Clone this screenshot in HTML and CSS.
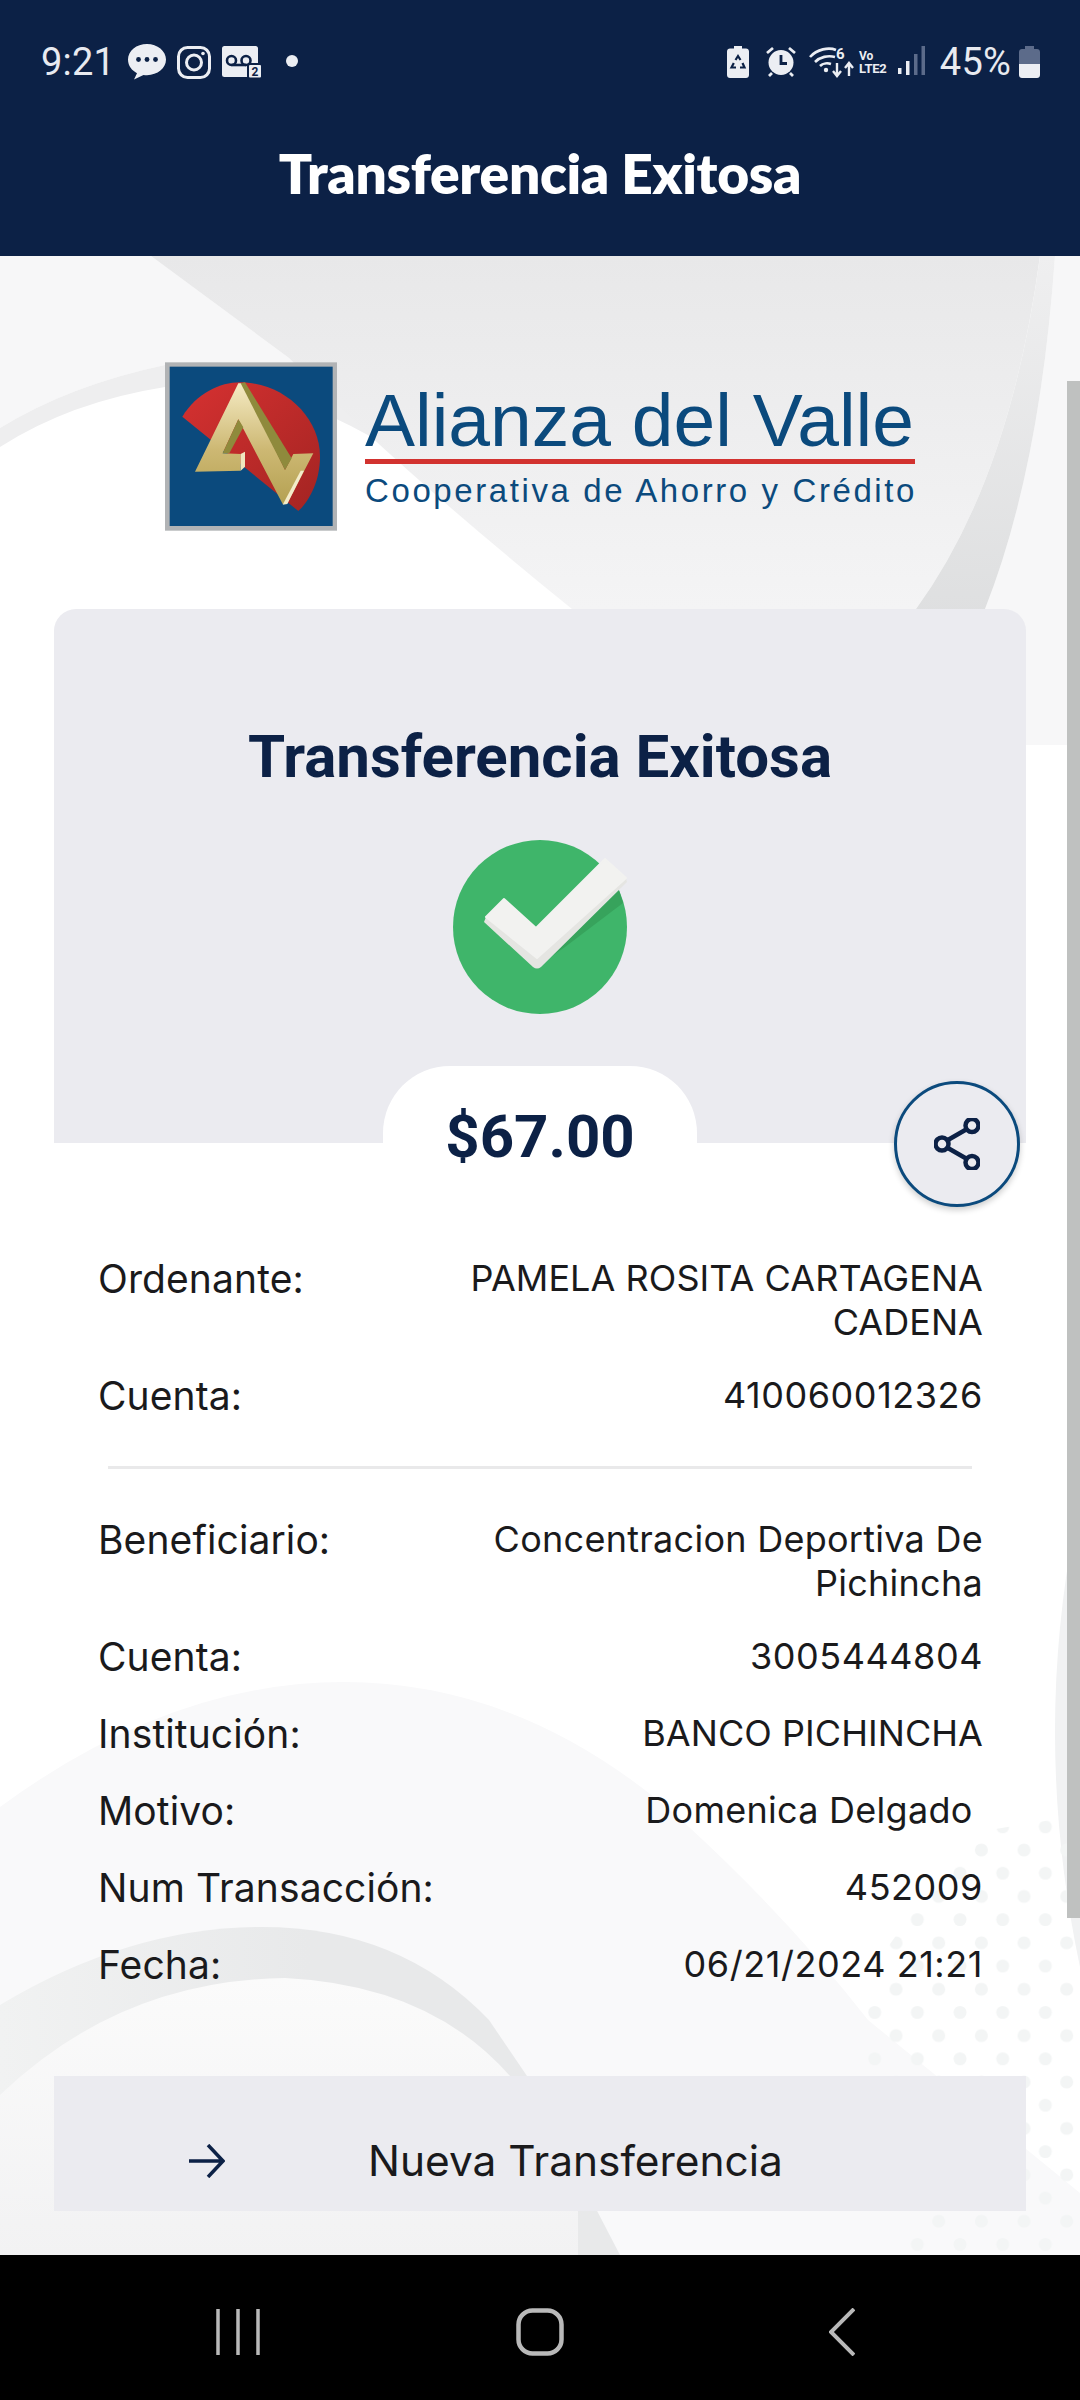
FILE: index.html
```html
<!DOCTYPE html>
<html lang="en">
<head>
  <meta charset="UTF-8" />
  <meta name="viewport" content="width=device-width, initial-scale=1.0" />
  <title>Transferencia Exitosa</title>
  <link rel="stylesheet" href="styles.css">
</head>
<body>
  <div class="page">
    <header class="top">
      <!-- Status bar -->
      <div class="status">
        <div class="status-left">
          <span class="time">9:21</span>
          <svg class="ic-bubble" width="38" height="36" viewBox="0 0 38 36">
            <path fill="#eceef3" d="M19 0C8.5 0 0 6.8 0 15.6c0 6.2 4 11.2 9 13.6L6 35.5l9.5-4.6c1.1.2 2.3.3 3.5.3 10.5 0 19-7 19-15.6S29.500 0 19 0z"/>
            <circle cx="10.500" cy="15.500" r="2.400" fill="#0c2146"/><circle cx="19" cy="15.500" r="2.400" fill="#0c2146"/><circle cx="27.500" cy="15.500" r="2.400" fill="#0c2146"/>
          </svg>
          <svg class="ic-insta" width="34" height="33" viewBox="0 0 34 33" fill="none" stroke="#eceef3" stroke-width="3">
            <rect x="1.500" y="1.500" width="31" height="30" rx="9"/>
            <circle cx="17" cy="16.500" r="7.500"/>
            <circle cx="26" cy="7.500" r="1.800" fill="#eceef3" stroke="none"/>
          </svg>
          <svg class="ic-voice" width="41" height="33" viewBox="0 0 41 33">
            <rect x="0" y="0" width="36" height="31" rx="2.500" fill="#eceef3"/>
            <circle cx="9.500" cy="14.500" r="4.500" fill="none" stroke="#0c2146" stroke-width="2.600"/>
            <circle cx="24" cy="14.500" r="4.500" fill="none" stroke="#0c2146" stroke-width="2.600"/>
            <path d="M9.500 19h14.500" stroke="#0c2146" stroke-width="2.600"/>
            <rect x="26" y="18" width="14" height="14.500" rx="2" fill="#eceef3" stroke="#0c2146" stroke-width="2"/>
            <text class="svg-small" x="33" y="30" text-anchor="middle" font-size="12" fill="#0c2146">2</text>
          </svg>
          <span class="dot"></span>
        </div>
        <div class="status-right">
          <svg class="ic-power" width="22" height="32" viewBox="0 0 22 32">
            <path fill="#eceef3" d="M7 0h8v2.500h4c1.700 0 3 1.300 3 3V29c0 1.700-1.300 3-3 3H3c-1.700 0-3-1.300-3-3V5.500c0-1.700 1.300-3 3-3h4z"/>
            <path fill="none" stroke="#0c2146" stroke-width="2.200" d="M8.500 14l2.500-4 2.500 4M15.500 17l2 4.500h-4.500M9 21.500H4.500l2.300-4.500"/>
          </svg>
          <svg class="ic-alarm" width="30" height="31" viewBox="0 0 30 31">
            <circle cx="15" cy="16.500" r="12.500" fill="#eceef3"/>
            <path d="M1 7l6-5M29 7l-6-5" stroke="#eceef3" stroke-width="2.800" fill="none"/>
            <path d="M6 27l-3 3M24 27l3 3" stroke="#eceef3" stroke-width="2.800" fill="none"/>
            <path d="M15 9v8.500h6" stroke="#0c2146" stroke-width="2.800" fill="none"/>
          </svg>
          <svg class="ic-net" width="84" height="32" viewBox="0 0 84 32">
            <g fill="none" stroke="#eceef3" stroke-width="2.600">
              <path d="M1 11C8 3 20 1 27 4"/>
              <path d="M6 16c5-5 13-7 20-5"/>
              <path d="M11 20c3-3 8-3 11-2"/>
            </g>
            <circle cx="17" cy="24" r="2.200" fill="#eceef3"/>
            <text class="svg-small" x="27" y="13" font-size="15" fill="#eceef3">6</text>
            <path d="M28 17v12M24 25l4 5 4-5M40 30V18M36 22l4-5 4 5" fill="none" stroke="#eceef3" stroke-width="2.400"/>
            <text class="svg-small" x="50" y="14" font-size="12" fill="#eceef3">Vo</text>
            <text class="svg-small" x="50" y="27" font-size="13" letter-spacing="-.2" fill="#eceef3">LTE2</text>
          </svg>
          <svg class="ic-bars" width="27" height="29" viewBox="0 0 27 29">
            <rect x="0" y="22" width="3.500" height="6" fill="#eceef3"/>
            <rect x="8" y="15" width="3.500" height="14" fill="#eceef3"/>
            <rect x="16" y="8" width="3.500" height="21" fill="#5c6b8a"/>
            <rect x="23.500" y="0" width="3.500" height="29" fill="#5c6b8a"/>
          </svg>
          <span class="battery-text">45%</span>
          <svg class="ic-battery" width="21" height="32" viewBox="0 0 21 32">
            <path fill="#5c6b8a" d="M6 0h9v3h3c1.700 0 3 1.300 3 3v12H0V6c0-1.700 1.300-3 3-3h3z"/>
            <path fill="#eceef3" d="M0 18h21v11c0 1.700-1.300 3-3 3H3c-1.700 0-3-1.300-3-3z"/>
          </svg>
        </div>
      </div>
      <h1>Transferencia Exitosa</h1>
    </header>

    <main class="content">
      <!-- Background swooshes and dots -->
      <svg class="backdrop" width="1080" height="1999" viewBox="0 256 1080 1999">
        <defs>
          <linearGradient id="topGrey" x1="0" y1="0" x2="0" y2="1">
            <stop offset="0" stop-color="#e8e8e9"/>
            <stop offset=".7" stop-color="#f4f4f5"/>
            <stop offset="1" stop-color="#f6f6f7"/>
          </linearGradient>
          <linearGradient id="bandGrey" x1="0" y1="0" x2="0" y2="1">
            <stop offset="0" stop-color="#efeff0"/>
            <stop offset="1" stop-color="#dcddde"/>
          </linearGradient>
          <linearGradient id="crescentEdge" x1="0" y1="0" x2="1" y2="0">
            <stop offset="0" stop-color="#f1f2f2"/>
            <stop offset=".5" stop-color="#e8e9ea"/>
            <stop offset="1" stop-color="#e8e9ea"/>
          </linearGradient>
          <linearGradient id="crescent" x1="0" y1="0" x2="0" y2="1">
            <stop offset="0" stop-color="#fbfbfb"/>
            <stop offset="1" stop-color="#f2f2f3"/>
          </linearGradient>
          <pattern id="dots" x="874.700" y="1850" width="42.670" height="46.400" patternUnits="userSpaceOnUse">
            <circle cx="21.330" cy="0" r="6.500" fill="#f3f5f5"/>
            <circle cx="21.330" cy="46.400" r="6.500" fill="#f3f5f5"/>
            <circle cx="0" cy="23.200" r="6.500" fill="#f3f5f5"/>
            <circle cx="42.670" cy="23.200" r="6.500" fill="#f3f5f5"/>
          </pattern>
        </defs>
        <path fill="#f7f7f8" d="M0 256H151L289 358 345 410Q250 350 165 365 70 385 0 428Z"/>
        <path fill="#eeeeef" d="M0 428Q70 385 165 365 260 350 345 410L385 445Q270 375 165 387 70 402 0 447Z"/>
        <path fill="url(#topGrey)" d="M151 256H1040Q1010 480 916 609V760H572V609Q400 470 289 358Z"/>
        <path fill="#f7f7f8" d="M1055 256H1080V745H960V609H985Q1040 470 1055 256Z"/>
        <path fill="url(#bandGrey)" d="M1040 256H1055Q1040 470 985 609V660H916V609Q1010 480 1040 256Z"/>
        <path fill="#f1f2f3" d="M1080 1500Q1030 1730 1080 1967Z"/>
        <path fill="#f9f9fa" d="M0 1807Q170 1682 344 1682 530 1682 689 1827 790 1920 868 2020L1080 2193V2255H0Z"/>
        <path fill="url(#crescentEdge)" d="M0 2005Q130 1927 262 1927 400 1927 489 2020L527 2076 620 2255H0Z"/>
        <path fill="url(#crescent)" d="M0 2095Q120 1980 285 1978 430 1985 510 2076L578 2200V2255H0Z"/>
        <path fill="url(#dots)" d="M1080 1815L960 1835 900 1930 868 1975V2150H910V2255H1080Z"/>
      </svg>
      <div class="thumb"></div>

      <!-- Logo -->
      <div class="brand">
        <svg class="brand-mark" width="172" height="169" viewBox="45 37 516 505">
          <defs>
            <linearGradient id="redFill" x1="0" y1="0" x2="1" y2="1">
              <stop offset="0" stop-color="#d63131"/>
              <stop offset="1" stop-color="#a32422"/>
            </linearGradient>
            <linearGradient id="goldFill" x1="0" y1="0" x2="0" y2="1">
              <stop offset="0" stop-color="#f5ebc4"/>
              <stop offset=".55" stop-color="#cdb873"/>
              <stop offset="1" stop-color="#b4a152"/>
            </linearGradient>
          </defs>
          <rect x="45" y="37" width="516" height="505" fill="#b1b3b5"/>
          <rect x="59" y="50" width="489" height="478" fill="#0b4a7d"/>
          <path fill="url(#redFill)" d="M97 200C140 130 210 97 270 97 400 97 510 200 510 320 510 390 480 450 445 483Z"/>
          <path fill="url(#goldFill)" d="M265 100L135 365 272 362V312L218 310 265 208 398 462 412 460 490 310 430 312 405 360 280 100Z"/>
          <path fill="#8f8a3c" d="M272 100L285 97 425 325 405 360Z"/>
          <path fill="#8f8a3c" d="M265 208L280 232 238 310H218Z"/>
          <path fill="#efe6bf" d="M272 312L285 305V350L272 362Z"/>
          <path fill="#f3ecca" d="M398 464L412 462 462 362 452 362Z"/>
        </svg>
        <div class="brand-text">
          <div class="brand-name">Alianza del Valle</div>
          <div class="brand-rule"></div>
          <div class="brand-sub">Cooperativa de Ahorro y Crédito</div>
        </div>
      </div>

      <!-- Result card -->
      <section class="card">
        <h2>Transferencia Exitosa</h2>
        <svg class="check" width="174" height="174" viewBox="0 0 174 174">
          <circle cx="87" cy="87" r="87" fill="#3fb56a"/>
          <path fill="#37a35c" d="M166 50L170 63 112 107 96 118Z"/>
          <path fill="#e5e5e2" d="M33 77L31 82 80 127Q84 130 88 127L174 42 173 38 84 118Z"/>
          <path fill="#f2f2f0" stroke="#f2f2f0" stroke-width="2" stroke-linejoin="round" d="M33 77L51 59 83 88 152 19 173 38 84 118Z"/>
        </svg>
        <div class="amount">$67.00</div>
        <button class="share" type="button" aria-label="Compartir">
          <svg width="46" height="52" viewBox="0 0 46 52" fill="none" stroke="#0c2146" stroke-width="4.500">
            <path d="M13 22.500L33 11M13 29.500L33 41"/>
            <circle cx="8" cy="26" r="6.500"/>
            <circle cx="38" cy="7.500" r="6.500"/>
            <circle cx="38" cy="44.500" r="6.500"/>
          </svg>
        </button>
      </section>

      <!-- Transfer details -->
      <div class="details">
        <div class="row row-wrap">
          <span class="label">Ordenante:</span>
          <span class="value caps">PAMELA ROSITA CARTAGENA CADENA</span>
        </div>
        <div class="row row-last">
          <span class="label">Cuenta:</span>
          <span class="value num">410060012326</span>
        </div>
        <hr class="divider">
        <div class="row row-wrap">
          <span class="label">Beneficiario:</span>
          <span class="value">Concentracion Deportiva De Pichincha</span>
        </div>
        <div class="row">
          <span class="label">Cuenta:</span>
          <span class="value num">3005444804</span>
        </div>
        <div class="row">
          <span class="label">Institución:</span>
          <span class="value caps">BANCO PICHINCHA</span>
        </div>
        <div class="row">
          <span class="label">Motivo:</span>
          <span class="value">Domenica Delgado&nbsp;</span>
        </div>
        <div class="row">
          <span class="label">Num Transacción:</span>
          <span class="value num">452009</span>
        </div>
        <div class="row row-last">
          <span class="label">Fecha:</span>
          <span class="value num">06/21/2024 21:21</span>
        </div>
      </div>

      <button class="next" type="button">
        <svg width="36" height="34" viewBox="0 0 36 34" fill="none" stroke="#0c2146" stroke-width="3.500">
          <path d="M0 17H33M19 1L34 17 19 33"/>
        </svg>
        <span>Nueva Transferencia</span>
      </button>
    </main>

    <!-- Android nav bar -->
    <nav class="navbar">
      <svg class="nav-recents" width="44" height="46" viewBox="0 0 44 46" fill="none" stroke="#b9b9b9" stroke-width="3.500">
        <path d="M2 0V46M22 0V46M42 0V46"/>
      </svg>
      <svg class="nav-home" width="48" height="48" viewBox="0 0 48 48" fill="none" stroke="#b9b9b9" stroke-width="4.500">
        <rect x="2.500" y="2.500" width="43" height="43" rx="14"/>
      </svg>
      <svg class="nav-back" width="26" height="48" viewBox="0 0 26 48" fill="none" stroke="#b9b9b9" stroke-width="4">
        <path d="M25 1L2 24 25 47"/>
      </svg>
    </nav>
  </div>
</body>
</html>
```

FILE: styles.css
```css
/* Global */
* {
  box-sizing: border-box;
}

body {
  margin: 0;
  font-family: Inter, 'Noto Sans', sans-serif;
  color: #1a1a1c;
  background: #fff;
}

.page {
  width: 1080px;
  height: 2400px;
  display: flex;
  flex-direction: column;
  overflow: hidden;
}

/* Header */
.top {
  height: 256px;
  flex: none;
  background: #0c2146;
  color: #fff;
}

.status {
  display: flex;
  justify-content: space-between;
  height: 143px;
  padding: 44px 40px 0 41px;
}

.status-left,
.status-right {
  display: flex;
  align-items: flex-start;
  height: 36px;
}

.status svg {
  display: block;
}

.time,
.battery-text {
  font-family: Roboto, sans-serif;
  font-size: 38px;
  line-height: 36px;
  color: #e8eaf0;
  letter-spacing: 0.2px;
}

.ic-bubble {
  margin-left: 13px;
}

.ic-insta {
  margin: 2px 0 0 11px;
}

.ic-voice {
  margin: 2px 0 0 11px;
}

.dot {
  width: 12px;
  height: 12px;
  margin: 11px 0 0 23px;
  border-radius: 50%;
  background: #eceef3;
}

.svg-small {
  font-family: Roboto, sans-serif;
  font-weight: 700;
}

.ic-power {
  margin-top: 2px;
}

.ic-alarm {
  margin: 2px 0 0 17px;
}

.ic-net {
  margin: 2px 0 0 13px;
}

.ic-bars {
  margin: 2px 0 0 5px;
}

.battery-text {
  margin-left: 15px;
}

.ic-battery {
  margin: 2px 0 0 8px;
}

h1 {
  margin: 0;
  font-family: Lato, sans-serif;
  font-size: 55px;
  font-weight: 800;
  line-height: 60px;
  letter-spacing: -0.3px;
  text-align: center;
}

/* Main area */
.content {
  position: relative;
  flex: 1;
  padding: 106px 54px 0;
  overflow: hidden;
}

.backdrop {
  position: absolute;
  top: 0;
  left: 0;
}

.thumb {
  position: absolute;
  top: 125px;
  right: 0;
  width: 13px;
  height: 1537px;
  background: #bfc1c0;
}

.brand,
.card,
.details,
.next {
  position: relative;
}

/* Logo */
.brand {
  display: flex;
  gap: 28px;
  margin: 0 0 78px 111px;
}

.brand-mark {
  display: block;
}

.brand-text {
  width: 550px;
  padding-top: 18px;
  font-family: 'Liberation Sans', Arial, sans-serif;
  color: #0b4a7d;
}

.brand-name {
  font-size: 75px;
  line-height: 80px;
  white-space: nowrap;
}

.brand-rule {
  height: 5px;
  margin-top: -1px;
  background: #d2322f;
}

.brand-sub {
  margin-top: 8px;
  font-size: 33px;
  line-height: 38px;
  letter-spacing: 2.6px;
  white-space: nowrap;
}

/* Result card */
.card {
  display: flex;
  flex-direction: column;
  align-items: center;
  height: 534px;
  padding-top: 113px;
  background: #ebebf0;
  border-radius: 22px 22px 0 0;
  font-family: Roboto, sans-serif;
  color: #0c2146;
}

h2 {
  flex: none;
  margin: 0 0 48px;
  font-size: 60px;
  font-weight: 700;
  line-height: 70px;
}

.check {
  display: block;
  flex: none;
  margin-bottom: 52px;
}

.amount {
  flex: none;
  width: 314px;
  height: 106px;
  padding-top: 36px;
  background: #fff;
  border-radius: 67px 67px 0 0;
  font-size: 60px;
  font-weight: 700;
  line-height: 70px;
  text-align: center;
}

.share {
  position: absolute;
  right: 6px;
  bottom: -64px;
  display: flex;
  align-items: center;
  justify-content: center;
  width: 126px;
  height: 126px;
  padding: 0;
  background: #ebebf0;
  border: 3px solid #0b4a7d;
  border-radius: 50%;
  box-shadow: 0 3px 6px rgba(0, 0, 0, 0.2);
}

/* Details */
.details {
  margin-top: 113px;
  padding: 0 43px 0 44px;
}

.row {
  display: flex;
  justify-content: space-between;
  align-items: flex-start;
  margin-bottom: 32px;
}

.row-wrap {
  margin-bottom: 29px;
}

.row-last {
  margin-bottom: 0;
}

.label {
  padding-top: 1px;
  font-size: 39px;
  line-height: 44px;
  letter-spacing: 0.1px;
  white-space: nowrap;
}

.value {
  max-width: 540px;
  font-size: 36px;
  line-height: 44px;
  letter-spacing: 0.27px;
  text-align: right;
}

.value.caps {
  letter-spacing: 0.06px;
}

.value.num {
  letter-spacing: 0.55px;
}

.divider {
  height: 3px;
  margin: 48px 11px 48px 10px;
  border: none;
  background: #e9e9ea;
}

/* Bottom button */
.next {
  display: flex;
  align-items: center;
  gap: 143px;
  width: 972px;
  height: 135px;
  margin-top: 89px;
  padding: 34px 0 0 135px;
  background: #ebebf0;
  border: none;
  font-family: Inter, sans-serif;
  font-size: 42.400px;
  color: #1a1a1c;
}

/* Nav bar */
.navbar {
  position: relative;
  height: 145px;
  flex: none;
  display: flex;
  align-items: center;
  background: #000;
  padding: 8px 0 0 216px;
}

.nav-recents {
  display: block;
}

.nav-home {
  display: block;
  margin-left: 256px;
}

.nav-back {
  display: block;
  margin-left: 265px;
}
```
